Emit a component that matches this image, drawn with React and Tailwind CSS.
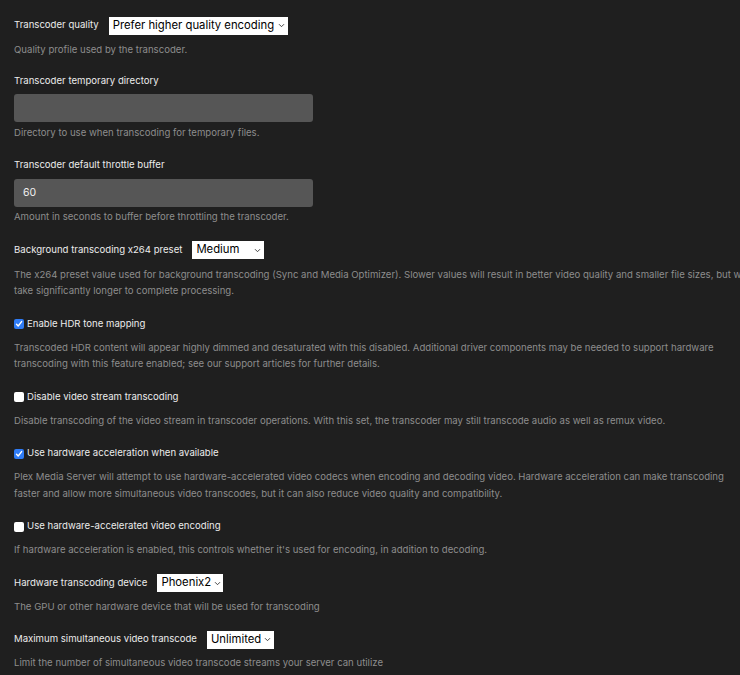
import { useState } from "react";

const font = { fontFamily: "Inter, 'Noto Sans', sans-serif" };

function Chevron() {
  return (
    <svg width="7" height="5" viewBox="0 0 7 5" className="shrink-0">
      <path d="M1 1.2 L3.5 3.7 L6 1.2" fill="none" stroke="#333" strokeWidth="0.9" />
    </svg>
  );
}

function Select({ value, width }) {
  return (
    <div
      className={`ml-[10px] flex h-[18px] items-center justify-between whitespace-nowrap bg-white pl-[4px] pr-[3px] text-[11.3px] leading-none text-black ${width}`}
    >
      <span>{value}</span>
      <span className="ml-[3px]">
        <Chevron />
      </span>
    </div>
  );
}

function Desc({ children }) {
  return <p className="text-[9.6px] leading-[16.5px] text-[#8d8d8d]">{children}</p>;
}

function SelectSetting({ label, value, width, desc, gap = "mt-[6.75px]", mb = "mb-[15.25px]" }) {
  return (
    <div className={mb}>
      <div className="flex h-[18px] items-center">
        <span className="text-[9.6px] text-[#ececec]">{label}</span>
        <Select value={value} width={width} />
      </div>
      <div className={gap}>
        <Desc>{desc}</Desc>
      </div>
    </div>
  );
}

function TextSetting({ label, value, desc }) {
  return (
    <div className="mb-[15.25px]">
      <div className="flex h-[18px] items-center text-[9.6px] text-[#ececec]">{label}</div>
      <div className="mt-[4px] flex h-[28px] w-[299px] items-center rounded-[3px] bg-[#565656] px-[9px] text-[10.5px] text-[#f0f0f0]">
        {value}
      </div>
      <div className="mt-[2.75px]">
        <Desc>{desc}</Desc>
      </div>
    </div>
  );
}

function CheckSetting({ label, checked, desc }) {
  const [on, setOn] = useState(checked);
  return (
    <div className="mb-[15.25px]">
      <label className="flex h-[18px] cursor-pointer items-center" onClick={() => setOn(!on)}>
        {on ? (
          <span className="flex h-[10px] w-[10px] items-center justify-center rounded-[2px] bg-[#2f7cf6]">
            <svg width="8" height="8" viewBox="0 0 8 8">
              <path d="M1.5 4.2 L3.2 6 L6.6 1.6" fill="none" stroke="white" strokeWidth="1.4" strokeLinecap="round" strokeLinejoin="round" />
            </svg>
          </span>
        ) : (
          <span className="h-[10px] w-[10px] rounded-[2px] bg-white" />
        )}
        <span className="ml-[3px] text-[9.6px] text-[#ececec]">{label}</span>
      </label>
      <div className="mt-[6.75px]">
        <Desc>{desc}</Desc>
      </div>
    </div>
  );
}

export default function App() {
  return (
    <div className="h-screen w-full overflow-hidden bg-[#1f1f1f]" style={font}>
      <div className="ml-[14px] w-[736px] pt-[16.5px]">
        <SelectSetting
          label="Transcoder quality"
          value="Prefer higher quality encoding"
          width="w-[179px]"
          gap="mt-[7.75px]"
          mb="mb-[13.25px]"
          desc="Quality profile used by the transcoder."
        />
        <TextSetting
          label="Transcoder temporary directory"
          value=""
          desc="Directory to use when transcoding for temporary files."
        />
        <TextSetting
          label="Transcoder default throttle buffer"
          value="60"
          desc="Amount in seconds to buffer before throttling the transcoder."
        />
        <SelectSetting
          label="Background transcoding x264 preset"
          value="Medium"
          width="w-[72px]"
          gap="mt-[7.75px]"
          desc="The x264 preset value used for background transcoding (Sync and Media Optimizer). Slower values will result in better video quality and smaller file sizes, but will take significantly longer to complete processing."
        />
        <CheckSetting
          label="Enable HDR tone mapping"
          checked
          desc="Transcoded HDR content will appear highly dimmed and desaturated with this disabled. Additional driver components may be needed to support hardware transcoding with this feature enabled; see our support articles for further details."
        />
        <CheckSetting
          label="Disable video stream transcoding"
          checked={false}
          desc="Disable transcoding of the video stream in transcoder operations. With this set, the transcoder may still transcode audio as well as remux video."
        />
        <CheckSetting
          label="Use hardware acceleration when available"
          checked
          desc="Plex Media Server will attempt to use hardware-accelerated video codecs when encoding and decoding video. Hardware acceleration can make transcoding faster and allow more simultaneous video transcodes, but it can also reduce video quality and compatibility."
        />
        <CheckSetting
          label="Use hardware-accelerated video encoding"
          checked={false}
          desc="If hardware acceleration is enabled, this controls whether it's used for encoding, in addition to decoding."
        />
        <SelectSetting
          label="Hardware transcoding device"
          value="Phoenix2"
          width="w-[66px]"
          desc="The GPU or other hardware device that will be used for transcoding"
        />
        <SelectSetting
          label="Maximum simultaneous video transcode"
          value="Unlimited"
          width="w-[67px]"
          desc="Limit the number of simultaneous video transcode streams your server can utilize"
        />
      </div>
    </div>
  );
}
